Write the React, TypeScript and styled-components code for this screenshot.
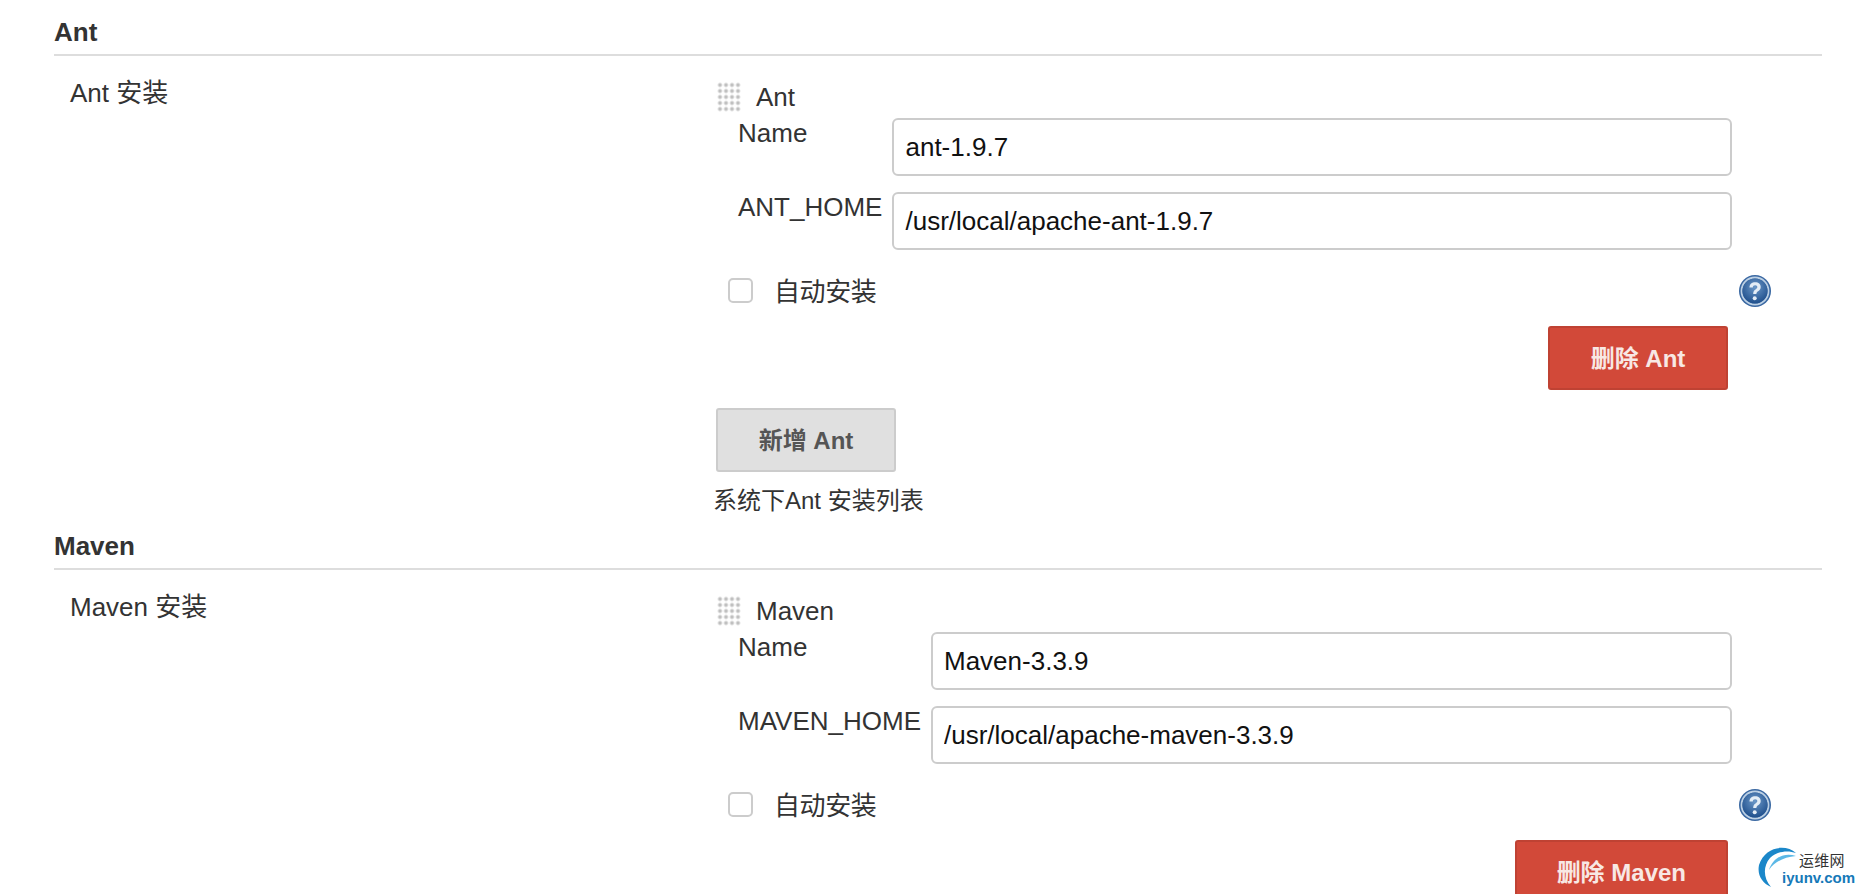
import React from "react";
import styled, { createGlobalStyle } from "styled-components";

const GlobalStyle = createGlobalStyle`
  html, body {
    margin: 0;
    padding: 0;
    background: #fff;
    overflow: hidden;
  }
  body {
    font-family: "Liberation Sans", "Noto Sans CJK SC", sans-serif;
    font-size: 26px;
    color: #333;
  }
`;

const Page = styled.div`
  position: relative;
  width: 1862px;
  height: 894px;
  overflow: hidden;
  padding: 0 40px 0 54px;
  box-sizing: border-box;
`;

const SectionHeader = styled.h2`
  margin: 0;
  height: 56px;
  box-sizing: border-box;
  padding-top: 16px;
  border-bottom: 2px solid #ddd;
  font-size: 26px;
  line-height: 32px;
  font-weight: 700;
  color: #333;
`;

const SectionRow = styled.div`
  display: grid;
  grid-template-columns: 662px 1fr;
`;

const SectionLabel = styled.div`
  padding: 21px 0 0 16px;
  line-height: 32px;
`;

const Tools = styled.div`
  padding-top: 27px;
`;

const ToolTitle = styled.div`
  display: flex;
  align-items: center;
  gap: 15px;
  height: 28px;
  padding-left: 1px;
`;

const Handle = styled.span`
  width: 24px;
  height: 30px;
  background-image: radial-gradient(circle at center, #b4b4b4 0, #c8c8c8 1.2px, #ececec 2.2px, transparent 3px);
  background-size: 6px 6px;
`;

const Fields = styled.div`
  display: grid;
  grid-template-columns: max-content 1fr;
  column-gap: 10px;
  row-gap: 16px;
  padding: 7px 90px 0 22px;
`;

const FieldLabel = styled.label`
  line-height: 30px;
`;

const TextInput = styled.input`
  width: 100%;
  height: 58px;
  box-sizing: border-box;
  padding: 0 11px;
  border: 2px solid #ccc;
  border-radius: 6px;
  background: #fff;
  font-family: inherit;
  font-size: 26px;
  color: #111;
  outline: none;
`;

const AutoRow = styled.div`
  display: flex;
  align-items: center;
  height: 32px;
  margin-top: 23px;
  padding: 0 50px 0 12px;
`;

const Box = styled.span`
  width: 25px;
  height: 25px;
  box-sizing: border-box;
  margin-top: 3px;
  border: 2px solid #ccc;
  border-radius: 5px;
  background: #fff;
`;

const AutoLabel = styled.span`
  margin-left: 21px;
  flex: 1;
  letter-spacing: -0.4px;
`;

const HelpWrap = styled.span`
  display: flex;
  margin-top: 3px;
`;

const DeleteRow = styled.div`
  display: flex;
  justify-content: flex-end;
  padding: 21px 94px 0 0;
`;

const Button = styled.button<{ $danger?: boolean }>`
  height: 64px;
  min-width: 180px;
  padding: 0 40px 3px;
  box-sizing: border-box;
  border: 2px solid ${(p) => (p.$danger ? "#bf4233" : "#ccc")};
  border-radius: 3px;
  background: ${(p) => (p.$danger ? "#d24939" : "#e0e0e0")};
  color: ${(p) => (p.$danger ? "#f8e8e4" : "#555")};
  font-family: inherit;
  font-size: 24px;
  font-weight: 700;
  white-space: nowrap;
`;

const AddRow = styled.div`
  margin-top: 18px;
`;

const Description = styled.div`
  margin: 13px 0 -3px -3px;
  line-height: 32px;
  font-size: 24px;
`;

const Watermark = styled.div`
  position: absolute;
  left: 1755px;
  top: 845px;
  width: 107px;
  height: 49px;
`;

const WatermarkCn = styled.span`
  position: absolute;
  left: 44px;
  top: 7px;
  font-size: 15px;
  line-height: 18px;
  letter-spacing: 0.3px;
  color: #333;
`;

const WatermarkUrl = styled.span`
  position: absolute;
  left: 27px;
  top: 24px;
  font-size: 15px;
  line-height: 18px;
  font-weight: 700;
  color: #1579b8;
`;

const HelpIcon = ({ id }: { id: string }) => (
  <svg width="34" height="34" viewBox="0 0 34 34">
    <defs>
      <radialGradient id={id} cx="50%" cy="35%" r="65%">
        <stop offset="0%" stopColor="#6c98c8" />
        <stop offset="100%" stopColor="#1f4f8c" />
      </radialGradient>
    </defs>
    <circle cx="17" cy="17" r="16" fill="#3a68a2" />
    <circle cx="17" cy="17" r="13.5" fill="none" stroke="#bcd0e4" strokeWidth="1.8" />
    <circle cx="17" cy="17" r="12.5" fill={`url(#${id})`} />
    <path
      d="M11.5 13.5c0-3.4 2.5-5.2 5.7-5.2 3.3 0 5.5 1.9 5.5 4.7 0 2.1-1.1 3.2-2.6 4.2-1.2.8-1.7 1.4-1.7 2.8h-3.2c0-2.4.7-3.5 2.3-4.6 1.2-.8 1.8-1.4 1.8-2.4 0-1.1-.8-1.8-2.1-1.8-1.4 0-2.3.9-2.4 2.3z"
      fill="#e4edf6"
    />
    <circle cx="16.7" cy="24.3" r="2" fill="#e4edf6" />
  </svg>
);

const WatermarkLogo = () => (
  <svg width="44" height="46" viewBox="0 0 44 46" style={{ position: "absolute", left: 0, top: 0 }}>
    <path d="M41 8C31 -1 10 1 4 20c-2 10 3 18 12 22C8 33 8 21 15 13 22 6 33 5 41 8z" fill="#1b87c9" />
    <path d="M41 11C30 7 18 12 14 25c5-8 15-13 27-14z" fill="#5bb8e6" />
  </svg>
);

type ToolProps = {
  title: string;
  homeLabel: string;
  name: string;
  home: string;
  helpId: string;
};

const Tool = ({ title, homeLabel, name, home, helpId }: ToolProps) => (
  <>
    <ToolTitle>
      <Handle />
      {title}
    </ToolTitle>
    <Fields>
      <FieldLabel>Name</FieldLabel>
      <TextInput defaultValue={name} readOnly />
      <FieldLabel>{homeLabel}</FieldLabel>
      <TextInput defaultValue={home} readOnly />
    </Fields>
    <AutoRow>
      <Box />
      <AutoLabel>自动安装</AutoLabel>
      <HelpWrap>
        <HelpIcon id={helpId} />
      </HelpWrap>
    </AutoRow>
    <DeleteRow>
      <Button $danger>删除 {title}</Button>
    </DeleteRow>
  </>
);

export default function App() {
  return (
    <Page>
      <GlobalStyle />
      <SectionHeader>Ant</SectionHeader>
      <SectionRow>
        <SectionLabel>Ant 安装</SectionLabel>
        <Tools>
          <Tool
            title="Ant"
            homeLabel="ANT_HOME"
            name="ant-1.9.7"
            home="/usr/local/apache-ant-1.9.7"
            helpId="help-ant"
          />
          <AddRow>
            <Button>新增 Ant</Button>
          </AddRow>
          <Description>系统下Ant 安装列表</Description>
        </Tools>
      </SectionRow>
      <SectionHeader>Maven</SectionHeader>
      <SectionRow>
        <SectionLabel>Maven 安装</SectionLabel>
        <Tools>
          <Tool
            title="Maven"
            homeLabel="MAVEN_HOME"
            name="Maven-3.3.9"
            home="/usr/local/apache-maven-3.3.9"
            helpId="help-maven"
          />
        </Tools>
      </SectionRow>
      <Watermark>
        <WatermarkLogo />
        <WatermarkCn>运维网</WatermarkCn>
        <WatermarkUrl>iyunv.com</WatermarkUrl>
      </Watermark>
    </Page>
  );
}
